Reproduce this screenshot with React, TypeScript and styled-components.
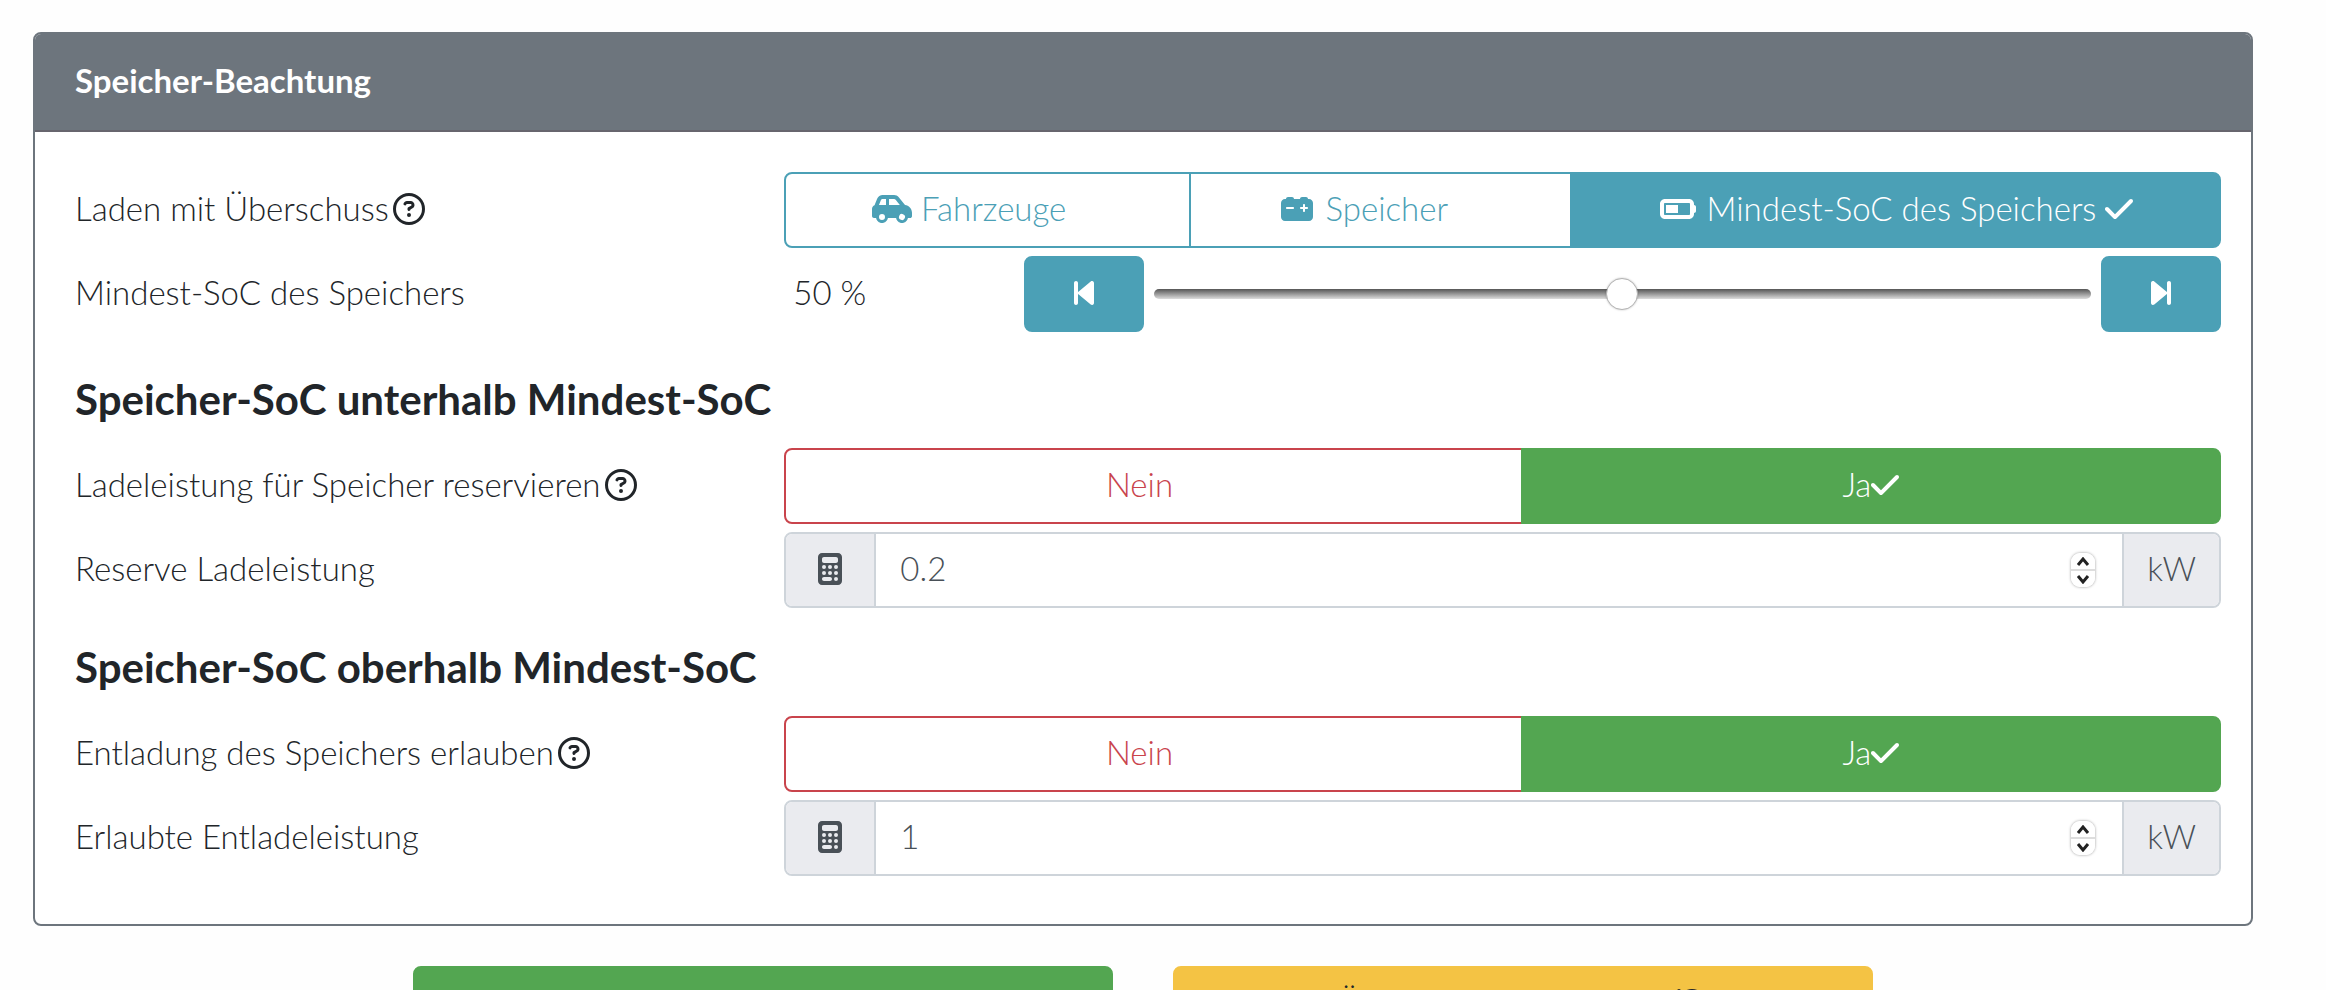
import React, { useState } from "react";
import styled, { createGlobalStyle, css } from "styled-components";
import {
  FaArrowRotateLeft,
  FaBackwardStep,
  FaBatteryHalf,
  FaCalculator,
  FaCarBattery,
  FaCarSide,
  FaCheck,
  FaForwardStep,
  FaRegCircleQuestion,
} from "react-icons/fa6";

const color = {
  info: "#4ba0b6",
  success: "#53a651",
  danger: "#c9444c",
  warning: "#f4c344",
  secondary: "#6d757d",
  text: "#212529",
  muted: "#495057",
  line: "#ced4da",
  addon: "#eaebef",
};

type Tone = "info" | "success" | "danger" | "warning";

const GlobalStyle = createGlobalStyle`
  *, *::before, *::after { box-sizing: border-box; }
  body {
    margin: 0;
    background: #fefefe;
    color: ${color.text};
    font-family: Lato, "Open Sans", sans-serif;
    font-size: 33px;
    font-weight: 300;
    line-height: 48px;
  }
  button, input { font: inherit; color: inherit; }
`;

const Page = styled.main`
  padding: 32px 73px 32px 33px;
`;

const Card = styled.section`
  border: 2px solid ${color.secondary};
  border-radius: 8px;
  background: #fff;
`;

const CardHeader = styled.header`
  padding: 22px 40px 26px;
  border-bottom: 2px solid #67656e;
  border-radius: 6px 6px 0 0;
  background: ${color.secondary};
  color: #fff;
  font-weight: 700;
`;

const CardBody = styled.div`
  padding: 40px 30px 40px 40px;
`;

const Row = styled.div`
  display: grid;
  grid-template-columns: calc(100% / 3 - 6px) 1fr;
  margin-bottom: 8px;
`;

const RangeSetting = styled(Row)`
  padding-bottom: 8px;
`;

const textInset = css`
  padding-top: 12px;
  padding-bottom: 16px;
`;

const LabelCell = styled.div`
  ${textInset}
  display: flex;
  gap: 4px;
  align-items: baseline;
`;

const HelpButton = styled.button`
  padding: 0;
  border: 0;
  background: none;
  cursor: pointer;
`;

const Icon = styled.span<{ $width: number; $hidden?: boolean }>`
  visibility: ${(p) => (p.$hidden ? "hidden" : "inherit")};

  svg {
    width: ${(p) => p.$width}px;
    height: 32px;
    vertical-align: -4px;
  }
`;

const SectionTitle = styled.h2`
  margin: 35px 0 25px;
  font-size: 42px;
  font-weight: 700;
  line-height: 48px;
`;

const Button = styled.button<{ $tone: Tone; $outline?: boolean }>`
  padding: 10px 24px 14px;
  border: 2px solid ${(p) => color[p.$tone]};
  border-radius: 8px;
  background: ${(p) => (p.$outline ? "#fff" : color[p.$tone])};
  color: ${(p) => (p.$outline ? color[p.$tone] : p.$tone === "warning" ? color.text : "#fff")};
  white-space: pre;
  cursor: pointer;
`;

const ButtonGroup = styled.div`
  display: flex;
`;

const GroupButton = styled(Button)`
  flex: 1 1 auto;
  border-radius: 0;

  & + & { margin-left: -2px; }
  &:first-child { border-radius: 8px 0 0 8px; }
  &:last-child { border-radius: 0 8px 8px 0; }
`;

const RangeControl = styled.div`
  display: grid;
  grid-template-columns: 1fr 5fr;
`;

const RangeValue = styled.output`
  ${textInset}
  padding-left: 9px;
`;

const RangeBar = styled.div`
  display: flex;
  align-items: center;
  gap: 10px;
`;

const StepButton = styled(Button)`
  width: 120px;
`;

const Slider = styled.input`
  flex: 1;
  min-width: 0;
  height: 32px;
  margin: 0;
  appearance: none;
  background: none;

  &::-webkit-slider-runnable-track {
    height: 10px;
    border-radius: 5px;
    background: linear-gradient(#555, #ddd);
  }
  &::-webkit-slider-thumb {
    appearance: none;
    width: 32px;
    height: 32px;
    margin-top: -11px;
    border: 1px solid #b4b4b4;
    border-radius: 50%;
    background: #fff;
    box-shadow: 0 0 2px rgba(0, 0, 0, 0.25);
  }
`;

const InputGroup = styled.div`
  display: flex;
  overflow: hidden;
  border: 2px solid ${color.line};
  border-radius: 8px;
  background: #fff;
  color: ${color.muted};
`;

const IconAddon = styled.span`
  width: 90px;
  padding: 10px 0 14px;
  border-right: 2px solid ${color.line};
  background: ${color.addon};
  text-align: center;
`;

const UnitAddon = styled.span`
  padding: 10px 23px 14px;
  border-left: 2px solid ${color.line};
  background: ${color.addon};
`;

const NumberInput = styled.input`
  flex: 1;
  min-width: 0;
  padding: 10px 24px 14px;
  border: 0;
  outline: 0;
  background: none;
  appearance: textfield;

  &::-webkit-inner-spin-button { display: none; }
`;

const Stepper = styled.div`
  display: flex;
  flex-direction: column;
  align-self: center;
  width: 24px;
  height: 34px;
  margin-right: 27px;
  overflow: hidden;
  border-radius: 9px;
  box-shadow: 0 0 3px rgba(0, 0, 0, 0.4);
`;

const StepperButton = styled.button`
  display: flex;
  flex: 1;
  align-items: center;
  justify-content: center;
  padding: 0;
  border: 0;
  background: #fff;

  & + & { border-top: 2px solid #ddd; }
  svg { width: 14px; height: 9px; }
`;

const Actions = styled.div`
  display: grid;
  grid-template-columns: 700px 700px;
  justify-content: center;
  gap: 60px;
  padding-top: 40px;
`;

function Tick({ shown = true }: { shown?: boolean }) {
  return (
    <Icon $width={28} $hidden={!shown}>
      <FaCheck />
    </Icon>
  );
}

function Help({ topic }: { topic: string }) {
  return (
    <HelpButton type="button" aria-label={`Hilfe: ${topic}`}>
      <Icon $width={32}>
        <FaRegCircleQuestion />
      </Icon>
    </HelpButton>
  );
}

interface YesNoProps {
  label: string;
  value: boolean;
  onChange: (value: boolean) => void;
}

function YesNoRow({ label, value, onChange }: YesNoProps) {
  return (
    <Row>
      <LabelCell>
        <span>{label}</span>
        <Help topic={label} />
      </LabelCell>
      <ButtonGroup role="group" aria-label={label}>
        <GroupButton type="button" $tone="danger" $outline={value} aria-pressed={!value} onClick={() => onChange(false)}>
          Nein<Tick shown={!value} />
        </GroupButton>
        <GroupButton type="button" $tone="success" $outline={!value} aria-pressed={value} onClick={() => onChange(true)}>
          Ja<Tick shown={value} />
        </GroupButton>
      </ButtonGroup>
    </Row>
  );
}

interface PowerProps {
  id: string;
  label: string;
  initial: number;
}

function PowerRow({ id, label, initial }: PowerProps) {
  const [value, setValue] = useState(String(initial));
  const step = (delta: number) => setValue(String(Math.round((Number(value) + delta) * 10) / 10));
  return (
    <Row>
      <LabelCell>
        <label htmlFor={id}>{label}</label>
      </LabelCell>
      <InputGroup>
        <IconAddon>
          <Icon $width={24}>
            <FaCalculator />
          </Icon>
        </IconAddon>
        <NumberInput id={id} type="number" step="0.1" value={value} onChange={(e) => setValue(e.target.value)} />
        <Stepper>
          <StepperButton type="button" aria-label="Erhöhen" onClick={() => step(0.1)}>
            <svg viewBox="0 0 14 9" fill="none" stroke="#222" strokeWidth="3">
              <path d="M2 8 7 2l5 6" />
            </svg>
          </StepperButton>
          <StepperButton type="button" aria-label="Verringern" onClick={() => step(-0.1)}>
            <svg viewBox="0 0 14 9" fill="none" stroke="#222" strokeWidth="3">
              <path d="M2 1l5 6 5-6" />
            </svg>
          </StepperButton>
        </Stepper>
        <UnitAddon>kW</UnitAddon>
      </InputGroup>
    </Row>
  );
}

const modes = [
  { key: "ev", label: "Fahrzeuge", icon: <FaCarSide /> },
  { key: "bat", label: "Speicher", icon: <FaCarBattery /> },
  { key: "soc", label: "Mindest-SoC des Speichers", icon: <FaBatteryHalf /> },
];

export default function App() {
  const [mode, setMode] = useState("soc");
  const [soc, setSoc] = useState(50);
  const [reserve, setReserve] = useState(true);
  const [discharge, setDischarge] = useState(true);

  return (
    <Page>
      <GlobalStyle />
      <Card>
        <CardHeader>Speicher-Beachtung</CardHeader>
        <CardBody>
          <Row>
            <LabelCell>
              <span>Laden mit Überschuss</span>
              <Help topic="Laden mit Überschuss" />
            </LabelCell>
            <ButtonGroup role="group" aria-label="Laden mit Überschuss">
              {modes.map((m) => (
                <GroupButton
                  key={m.key}
                  type="button"
                  $tone="info"
                  $outline={m.key !== mode}
                  aria-pressed={m.key === mode}
                  onClick={() => setMode(m.key)}
                >
                  <Icon $width={40}>{m.icon}</Icon> {m.label} <Tick shown={m.key === mode} />
                </GroupButton>
              ))}
            </ButtonGroup>
          </Row>
          <RangeSetting>
            <LabelCell>
              <label htmlFor="min-soc">Mindest-SoC des Speichers</label>
            </LabelCell>
            <RangeControl>
              <RangeValue htmlFor="min-soc">{soc} %</RangeValue>
              <RangeBar>
                <StepButton type="button" $tone="info" aria-label="Verringern" onClick={() => setSoc(Math.max(0, soc - 1))}>
                  <Icon $width={20}>
                    <FaBackwardStep />
                  </Icon>
                </StepButton>
                <Slider id="min-soc" type="range" min={0} max={100} value={soc} onChange={(e) => setSoc(Number(e.target.value))} />
                <StepButton type="button" $tone="info" aria-label="Erhöhen" onClick={() => setSoc(Math.min(100, soc + 1))}>
                  <Icon $width={20}>
                    <FaForwardStep />
                  </Icon>
                </StepButton>
              </RangeBar>
            </RangeControl>
          </RangeSetting>

          <SectionTitle>Speicher-SoC unterhalb Mindest-SoC</SectionTitle>
          <YesNoRow label="Ladeleistung für Speicher reservieren" value={reserve} onChange={setReserve} />
          <PowerRow id="reserve-power" label="Reserve Ladeleistung" initial={0.2} />

          <SectionTitle>Speicher-SoC oberhalb Mindest-SoC</SectionTitle>
          <YesNoRow label="Entladung des Speichers erlauben" value={discharge} onChange={setDischarge} />
          <PowerRow id="discharge-power" label="Erlaubte Entladeleistung" initial={1} />
        </CardBody>
      </Card>
      <Actions>
        <Button type="button" $tone="success">
          Speichern <Tick />
        </Button>
        <Button type="button" $tone="warning">
          Änderungen verwerfen{" "}
          <Icon $width={32}>
            <FaArrowRotateLeft />
          </Icon>
        </Button>
      </Actions>
    </Page>
  );
}
